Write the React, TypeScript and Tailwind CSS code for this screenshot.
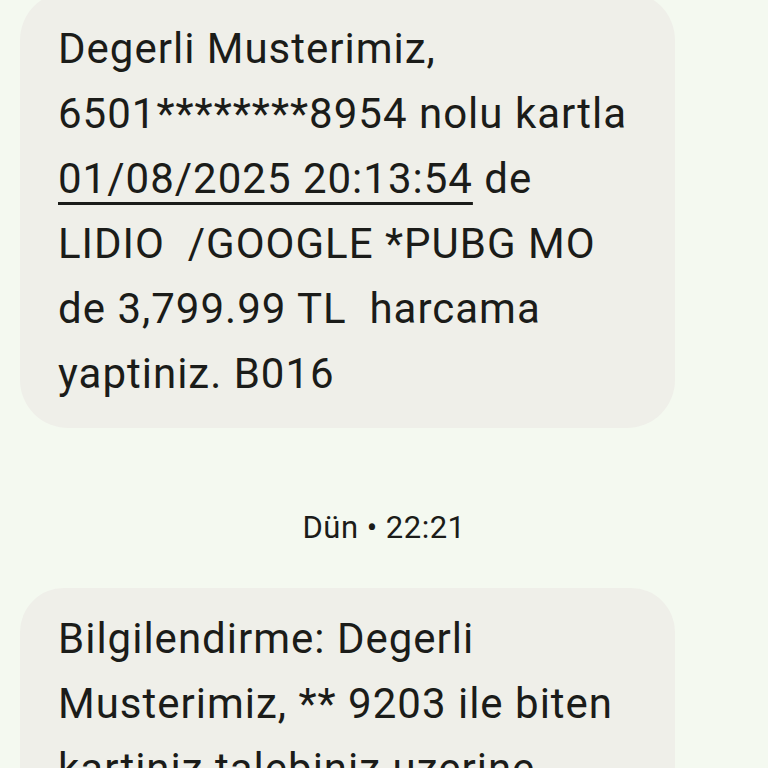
import React from "react";

export default function App() {
  return (
    <div
      className="w-[768px] h-[768px] overflow-hidden bg-[#f4f9f0] flex flex-col px-[20px]"
      style={{ fontFamily: "Roboto, 'Noto Sans', sans-serif" }}
    >
      <div className="mt-[-8px] w-[655px] shrink-0 rounded-[48px] bg-[#efefe9] pl-[38px] pr-[20px] pt-[24px] pb-[22px]">
        <p className="text-[42px] leading-[65px] tracking-[1px] text-[#1b1c19] whitespace-pre">
          Degerli Musterimiz,
          <br />
          6501********8954 nolu kartla
          <br />
          <span className="underline decoration-[3px] underline-offset-[9px]">01/08/2025 20:13:54</span> de
          <br />
          {"LIDIO  /GOOGLE *PUBG MO"}
          <br />
          {"de 3,799.99 TL  harcama"}
          <br />
          yaptiniz. B016
        </p>
      </div>
      <div className="mt-[80px] flex justify-center">
        <span className="text-[31px] leading-[40px] tracking-[0.5px] text-[#1b1c19]">Dün • 22:21</span>
      </div>
      <div className="mt-[40px] w-[655px] shrink-0 rounded-[44px] bg-[#efefe9] pl-[38px] pr-[20px] pt-[18px] pb-[22px]">
        <p className="text-[42px] leading-[65px] tracking-[1px] text-[#1b1c19] whitespace-pre">
          Bilgilendirme: Degerli
          <br />
          {"Musterimiz, ** 9203 ile biten"}
          <br />
          kartiniz talebiniz uzerine
          <br />
          iptal edilmistir.
        </p>
      </div>
    </div>
  );
}
